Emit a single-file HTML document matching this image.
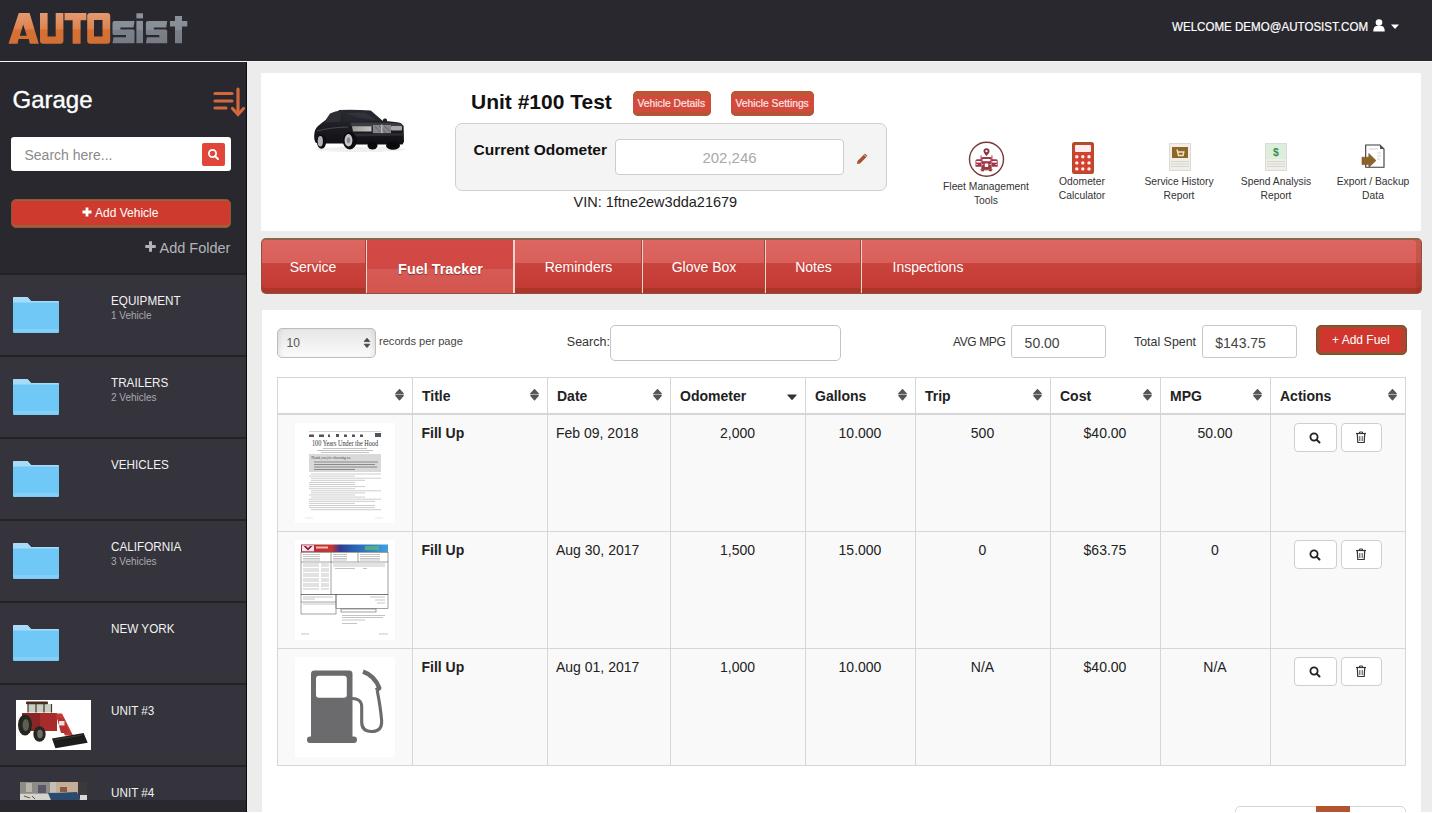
<!DOCTYPE html>
<html><head><meta charset="utf-8">
<style>
*{margin:0;padding:0;box-sizing:border-box}
html,body{width:1432px;height:813px;overflow:hidden;background:#ececec;font-family:"Liberation Sans",sans-serif;color:#333}
.a{position:absolute}
.t{position:absolute;line-height:1;white-space:nowrap}
#hdr{left:0;top:0;width:1432px;height:61px;background:#29282e}
#hdrline{left:0;top:61px;width:1432px;height:1px;background:#f4f4f4}
#side{left:0;top:62px;width:246px;height:751px;background:#29282e}
#sideedge{left:246px;top:62px;width:1px;height:751px;background:#0d0d10}
.sitem{position:absolute;left:0;width:246px;height:82px;background:#35343c;border-top:2px solid #232228}
.nm{position:absolute;left:111px;top:19px;font-size:13px;transform:scaleX(0.9);transform-origin:0 0;color:#f2f2f2;line-height:1;white-space:nowrap}
.sub{position:absolute;left:111px;top:36.3px;font-size:10px;color:#a9a9b0;line-height:1;white-space:nowrap}
.folder{position:absolute;left:13px;top:22px}
#panel1{left:261px;top:73px;width:1160px;height:158px;background:#fff}
#tabs{left:261px;top:238px;width:1161px;height:56px;border-radius:5px;box-shadow:inset 0 -5px 0 rgba(130,50,25,.35),inset -5px 0 0 rgba(130,50,25,.25);background:linear-gradient(#dc6661 0,#d95f5a 44%,#c9443d 44%,#c23832 100%);border:1px solid #93503c;border-top:2px solid #8c6446;overflow:hidden}
.tab{position:absolute;top:0;height:53px;color:#fff;font-size:14px;text-align:center;line-height:1;white-space:nowrap}
.tab span{position:absolute;left:0;right:0;top:19.5px}
.tdiv{position:absolute;top:0;width:2px;height:53px;border-left:1px solid #a9463b;border-right:1px solid #f3d3cc}
#panel2{left:262px;top:310px;width:1159px;height:503px;background:#fff}
.btnred{position:absolute;background:#cd3a2f;color:#fff;border-radius:4px;white-space:nowrap}
.inp{position:absolute;background:#fff;border:1px solid #c8c8c8;border-radius:4px}
.ic-lbl{position:absolute;font-size:10.3px;line-height:14px;text-align:center;color:#333;white-space:nowrap}
</style></head>
<body>
<div id="hdr" class="a"></div>
<div id="hdrline" class="a"></div>
<!-- logo -->
<svg class="a" style="left:0;top:0" width="200" height="60" viewBox="0 0 200 60">
<defs><linearGradient id="lg" x1="0" y1="13" x2="0" y2="44" gradientUnits="userSpaceOnUse"><stop offset="0" stop-color="#e39a70"/><stop offset="0.5" stop-color="#dd8450"/><stop offset="0.55" stop-color="#d8702f"/><stop offset="1" stop-color="#cf7038"/></linearGradient>
<linearGradient id="lg2" x1="0" y1="13" x2="0" y2="44" gradientUnits="userSpaceOnUse"><stop offset="0" stop-color="#8d939b"/><stop offset="0.55" stop-color="#878d95"/><stop offset="0.56" stop-color="#7b8089"/><stop offset="1" stop-color="#767b84"/></linearGradient></defs>
<g fill="url(#lg)" fill-rule="evenodd">
<path d="M8.5 43.7 L18.8 13 L29.6 13 L38.8 43.7 L29.8 43.7 L28.8 39 L18.6 39 L17.6 43.7 Z M23.2 24.5 L19.8 35.8 L26.8 35.8 Z"/>
<path d="M40 13 H47.6 V36.4 H55.7 V13 H63.4 V40.7 Q63.4 43.7 60.4 43.7 H43 Q40 43.7 40 40.7 Z"/>
<path d="M64.5 13 H86.4 V20.3 H80.6 V43.7 H72.6 V20.3 H64.5 Z"/>
<path d="M90.2 13 H107.2 Q110.2 13 110.2 16 V40.7 Q110.2 43.7 107.2 43.7 H90.2 Q87.2 43.7 87.2 40.7 V16 Q87.2 13 90.2 13 Z M94 19.9 V36.4 H102.5 V19.9 Z"/>
</g>
<g fill="url(#lg2)">
<path d="M114.5 20.9 H134.5 L133.5 27.5 H120.4 V29.4 H133 Q134.5 29.4 134.5 31 V43.2 H112.5 L113.5 37.2 H126 V35 H114 Q112.5 35 112.5 33.5 V23 Q112.5 20.9 114.5 20.9 Z"/>
<rect x="136.4" y="13.3" width="6.6" height="5.1"/><rect x="136.4" y="20.9" width="6.6" height="22.3"/>
<path d="M147.9 20.9 H167.2 L166.2 27.5 H153.8 V29.4 H165.7 Q167.2 29.4 167.2 31 V43.2 H145.9 L146.9 37.2 H159.3 V35 H147.4 Q145.9 35 145.9 33.5 V23 Q145.9 20.9 147.9 20.9 Z"/>
<path d="M175 15.9 H182 V20.9 H187.3 V26.5 H182 V43.2 H175 V26.5 H170 V20.9 H175 Z"/>
</g>
</svg>
<div class="t" style="left:1172.3px;top:20px;font-size:13px;transform:scaleX(0.89);transform-origin:0 0;color:#fff;-webkit-text-stroke:0.2px #fff">WELCOME DEMO@AUTOSIST.COM</div>
<svg class="a" style="left:1373px;top:19px" width="28" height="14" viewBox="0 0 28 14">
<circle cx="6" cy="3.6" r="3.3" fill="#fff"/><path d="M0.3 12.5 C0.3 8.3 2 7 3.5 7 L8.5 7 C10 7 11.7 8.3 11.7 12.5 Z" fill="#fff"/>
<path d="M18 5.5 L26 5.5 L22 10 Z" fill="#fff"/>
</svg>

<div id="side" class="a"></div>
<div id="sideedge" class="a"></div>
<div class="t" style="left:12.5px;top:87.7px;font-size:24px;color:#fff;-webkit-text-stroke:0.35px #fff">Garage</div>
<!-- sort icon -->
<svg class="a" style="left:212px;top:86px" width="36" height="32" viewBox="0 0 36 32">
<g stroke="#d2683c" stroke-width="3.2" stroke-linecap="round">
<line x1="3" y1="7.5" x2="20" y2="7.5"/><line x1="3" y1="15" x2="20" y2="15"/><line x1="3" y1="22" x2="14" y2="22"/>
<line x1="26" y1="3" x2="26" y2="28"/><path d="M20.5 22.5 L26 28.5 L31.5 22.5" fill="none"/>
</g></svg>
<div class="inp" style="left:11px;top:137px;width:220px;height:34px;border:none;border-radius:3px"></div>
<div class="t" style="left:24.5px;top:148.1px;font-size:14px;color:#8a8a8a">Search here...</div>
<div class="a" style="left:202px;top:143px;width:23px;height:23px;background:#e0473a;border-radius:2px"></div>
<svg class="a" style="left:202px;top:143px" width="23" height="23" viewBox="0 0 23 23"><circle cx="10.5" cy="10.5" r="3.6" stroke="#fff" stroke-width="1.8" fill="none"/><line x1="13" y1="13" x2="16" y2="16" stroke="#fff" stroke-width="2" stroke-linecap="round"/></svg>
<div class="btnred" style="left:11px;top:199px;width:220px;height:29px;background:#cf3a2e;border:1px solid #8a5a38;border-radius:5px;box-shadow:inset 0 1px 0 #a0603a,inset 0 -2px 0 #a0603a"></div>
<svg class="a" style="left:82px;top:207px" width="10" height="10" viewBox="0 0 10 10"><path d="M3.6 0.5h2.8v3.1h3.1v2.8H6.4v3.1H3.6V6.4H0.5V3.6h3.1z" fill="#fff"/></svg>
<div class="t" style="left:95px;top:206.8px;font-size:12px;color:#fff">Add Vehicle</div>
<svg class="a" style="left:145px;top:241px" width="11" height="11" viewBox="0 0 11 11"><path d="M4 0.3h3v3.7h3.7v3H7v3.7H4V7H0.3V4H4z" fill="#b4b4b8"/></svg>
<div class="t" style="left:159.5px;top:240.7px;font-size:14.5px;color:#b4b4b8">Add Folder</div>

<!-- sidebar list -->
<div class="sitem" style="top:273px"><svg class="folder" width="46" height="36" viewBox="0 0 46 36"><path d="M1.2 0 H14.5 L18 4 H44.8 Q46 4 46 5.2 V34.8 Q46 36 44.8 36 H1.2 Q0 36 0 34.8 V1.2 Q0 0 1.2 0Z" fill="#6fc8f6"/><path d="M1.2 0 H14.5 L18 4 H44.8 Q46 4 46 5.2 V5.5 H0 V1.2 Q0 0 1.2 0Z" fill="#a6dcf8"/><rect x="0.5" y="32" width="45" height="3.5" fill="#84cff7"/></svg><div class="nm">EQUIPMENT</div><div class="sub">1 Vehicle</div></div>
<div class="sitem" style="top:355px"><svg class="folder" width="46" height="36" viewBox="0 0 46 36"><path d="M1.2 0 H14.5 L18 4 H44.8 Q46 4 46 5.2 V34.8 Q46 36 44.8 36 H1.2 Q0 36 0 34.8 V1.2 Q0 0 1.2 0Z" fill="#6fc8f6"/><path d="M1.2 0 H14.5 L18 4 H44.8 Q46 4 46 5.2 V5.5 H0 V1.2 Q0 0 1.2 0Z" fill="#a6dcf8"/><rect x="0.5" y="32" width="45" height="3.5" fill="#84cff7"/></svg><div class="nm">TRAILERS</div><div class="sub">2 Vehicles</div></div>
<div class="sitem" style="top:437px"><svg class="folder" width="46" height="36" viewBox="0 0 46 36"><path d="M1.2 0 H14.5 L18 4 H44.8 Q46 4 46 5.2 V34.8 Q46 36 44.8 36 H1.2 Q0 36 0 34.8 V1.2 Q0 0 1.2 0Z" fill="#6fc8f6"/><path d="M1.2 0 H14.5 L18 4 H44.8 Q46 4 46 5.2 V5.5 H0 V1.2 Q0 0 1.2 0Z" fill="#a6dcf8"/><rect x="0.5" y="32" width="45" height="3.5" fill="#84cff7"/></svg><div class="nm">VEHICLES</div></div>
<div class="sitem" style="top:519px"><svg class="folder" width="46" height="36" viewBox="0 0 46 36"><path d="M1.2 0 H14.5 L18 4 H44.8 Q46 4 46 5.2 V34.8 Q46 36 44.8 36 H1.2 Q0 36 0 34.8 V1.2 Q0 0 1.2 0Z" fill="#6fc8f6"/><path d="M1.2 0 H14.5 L18 4 H44.8 Q46 4 46 5.2 V5.5 H0 V1.2 Q0 0 1.2 0Z" fill="#a6dcf8"/><rect x="0.5" y="32" width="45" height="3.5" fill="#84cff7"/></svg><div class="nm">CALIFORNIA</div><div class="sub">3 Vehicles</div></div>
<div class="sitem" style="top:601px"><svg class="folder" width="46" height="36" viewBox="0 0 46 36"><path d="M1.2 0 H14.5 L18 4 H44.8 Q46 4 46 5.2 V34.8 Q46 36 44.8 36 H1.2 Q0 36 0 34.8 V1.2 Q0 0 1.2 0Z" fill="#6fc8f6"/><path d="M1.2 0 H14.5 L18 4 H44.8 Q46 4 46 5.2 V5.5 H0 V1.2 Q0 0 1.2 0Z" fill="#a6dcf8"/><rect x="0.5" y="32" width="45" height="3.5" fill="#84cff7"/></svg><div class="nm">NEW YORK</div></div>
<div class="sitem" style="top:683px"><div class="nm">UNIT #3</div>
<svg class="a" style="left:16px;top:14.8px" width="75" height="50" viewBox="0 0 75 50">
<rect width="75" height="50" fill="#fff"/>
<rect x="12" y="4" width="24" height="8.5" fill="#c9cdc2"/>
<path d="M12 4 V12.5 M20 4 V12.5 M28 4 V12.5 M35.5 4 V12.5" stroke="#3a3a2e" stroke-width="1.2"/>
<rect x="10" y="1.4" width="22" height="2.8" rx="1" fill="#4a2a22"/>
<path d="M6 13 H26 V31 H14 L6 24 Z" fill="#8a2626"/>
<path d="M24 13 H41 V31 H24 Z" fill="#a92c2c"/>
<path d="M39 13.5 L46 13.5 L57 35.5 L49 35.5 Z" fill="#c23a32"/>
<path d="M41 18 L48 18 L53 33 L45 33 Z" fill="#b83030"/>
<rect x="43" y="21" width="5.5" height="4.5" fill="#ecdede"/>
<ellipse cx="9" cy="25" rx="7" ry="10.5" fill="#262620"/><ellipse cx="9.8" cy="25" rx="3.2" ry="6" fill="#5e5e54"/>
<ellipse cx="23.5" cy="34" rx="6.2" ry="7.8" fill="#262620"/><ellipse cx="24" cy="34" rx="2.8" ry="4.2" fill="#6e6e62"/>
<path d="M36 38.6 L67.6 33.1 L71.7 42.7 L39.4 48.2 Z" fill="#1c1c1c"/>
<path d="M38 40 L66 35" stroke="#3a3a3a" stroke-width="1"/>
</svg></div>
<div class="sitem" style="top:765px"><div class="nm">UNIT #4</div>
<svg class="a" style="left:20px;top:14.7px" width="67" height="18.3" viewBox="0 0 67 18.3">
<rect width="67" height="18.3" fill="#a09c92"/>
<rect x="0" y="0" width="30" height="11" fill="#8e8c86"/>
<rect x="6" y="1" width="6" height="9" fill="#b8b4a8"/><rect x="18" y="3" width="8" height="8" fill="#5a566a"/>
<rect x="30" y="0" width="6" height="11" fill="#c4c0b8"/>
<rect x="36" y="0" width="22" height="11" fill="#c4ae98"/><rect x="40" y="5" width="7" height="6" fill="#8a5a40"/>
<rect x="58" y="0" width="9" height="18.3" fill="#3a3a3c"/>
<path d="M0 12 H30 L35 10 H56 L60 18.3 H0 Z" fill="#d4d4cc"/>
<path d="M28 11 L57 10 L60 18.3 L31 18.3 Z" fill="#2c4a6e"/>
<path d="M4 14 L10 16 M12 14 L15 17" stroke="#555" stroke-width="1"/>
<rect x="60" y="13" width="7" height="5" fill="#d8d8d8"/>
</svg></div>
<div class="a" style="left:0;top:800px;width:246px;height:12px;background:#29282e"></div>


<div id="panel1" class="a"></div>
<!-- car -->
<svg class="a" style="left:310px;top:104px" width="100" height="50" viewBox="0 0 100 50">
<defs><linearGradient id="cb" x1="0" y1="0" x2="0" y2="1"><stop offset="0" stop-color="#2a2a32"/><stop offset="0.5" stop-color="#1c1c22"/><stop offset="1" stop-color="#101014"/></linearGradient>
<linearGradient id="hl" x1="0" y1="0" x2="1" y2="0"><stop offset="0" stop-color="#9c9c96"/><stop offset="1" stop-color="#c4c4be"/></linearGradient></defs>
<ellipse cx="50" cy="45.5" rx="45" ry="2.6" fill="#f0f0f0"/>
<path d="M29.3 5.9 Q45 5.2 60.8 6.6 L72.6 16.8 Q84 17.5 90.8 18.9 L93.6 22 L94 37.7 L92.5 40.5 L47 40.5 L33 39.5 L15 39.5 L6 39 Q4 37 4.2 31 Q4.5 25 8 22 L12.6 18.2 Z" fill="url(#cb)"/>
<path d="M14 18.5 L20 9.5 Q25 7 31 6.8 L30.5 18 Z" fill="#2e2e36"/>
<path d="M32.5 7 Q45 6.2 60 7.4 L70.5 16.8 L56 17.5 L33 18 Z" fill="#26262e"/>
<path d="M34 9 L55 8.5 L66 16 L50 14 Z" fill="#36363e" opacity="0.8"/>
<path d="M7 27 Q20 23.5 38 23" stroke="#4e4e56" stroke-width="0.9" fill="none"/>
<path d="M40 18.8 Q62 18 90.5 19.5 L92.5 22.3 L70 22 L42 23 Z" fill="#3c3c44"/>
<path d="M42 22.3 L61.5 22.3 L61.5 27.6 L43 27.6 Z" fill="url(#hl)"/>
<path d="M62.8 21 L81 21 L81 29.3 L62.8 29.3 Z" fill="#85858b"/>
<path d="M64.5 22 L71 28.5 M69 22 L76 28.5 M74 22 L80 27" stroke="#55555b" stroke-width="0.7"/>
<line x1="71.8" y1="20.5" x2="71.8" y2="29.5" stroke="#d0d0d0" stroke-width="1"/>
<rect x="81" y="22" width="11" height="4.6" rx="1" fill="#a9a9a4"/>
<path d="M41 29.5 L93.5 29.3 L93.8 31.5 L41 32.5 Z" fill="#2c2c32"/>
<rect x="73" y="14.5" width="4" height="3.5" rx="1.5" fill="#202026"/>
<ellipse cx="11.5" cy="37.7" rx="4.7" ry="7" fill="#0c0c0e"/><ellipse cx="10.3" cy="37.3" rx="2.6" ry="5.2" fill="#b4b4b8"/>
<ellipse cx="39.8" cy="36.7" rx="7" ry="8.7" fill="#0c0c0e"/><ellipse cx="38.5" cy="36.3" rx="3.9" ry="6.2" fill="#c6c6ca"/><ellipse cx="38.5" cy="36.3" rx="1.8" ry="3" fill="#8a8a90"/>
<ellipse cx="62.5" cy="41.5" rx="5" ry="4" fill="#0a0a0c"/>
<ellipse cx="83" cy="41.5" rx="7" ry="4.3" fill="#0a0a0c"/>
</svg>
<div class="t" style="left:471px;top:91.2px;font-size:21px;font-weight:700;color:#111">Unit #100 Test</div>
<div class="btnred" style="left:633px;top:91px;width:78px;height:25px;background:#d24a3b;border-radius:5px;box-shadow:inset 0 5px 0 #bf5436,inset 0 -4px 0 #b4553a"></div>
<div class="t" style="left:637.5px;top:99px;font-size:10.3px;color:#fde4e4;-webkit-text-stroke:0.2px #fde4e4">Vehicle Details</div>
<div class="btnred" style="left:731px;top:91px;width:83px;height:25px;background:#d24a3b;border-radius:5px;box-shadow:inset 0 5px 0 #bf5436,inset 0 -4px 0 #b4553a"></div>
<div class="t" style="left:735.5px;top:99px;font-size:10.3px;color:#fde4e4;-webkit-text-stroke:0.2px #fde4e4">Vehicle Settings</div>
<div class="a" style="left:455px;top:123px;width:432px;height:68px;background:#f4f4f4;border:1px solid #cfcfcf;border-radius:7px"></div>
<div class="t" style="left:473.5px;top:141.6px;font-size:15.5px;font-weight:700;color:#111">Current Odometer</div>
<div class="inp" style="left:615px;top:139px;width:229px;height:36px;border-color:#cdcdcd"></div>
<div class="t" style="left:615px;width:229px;text-align:center;top:150.1px;font-size:15px;color:#a9a9a9">202,246</div>
<svg class="a" style="left:856px;top:152px" width="13" height="13" viewBox="0 0 13 13"><path d="M1 12 L1.5 9 L9 1.5 L11.5 4 L4 11.5 Z" fill="#a5522e"/><path d="M8 2.5 L10.5 5" stroke="#f4f4f4" stroke-width="0.8"/></svg>
<div class="t" style="left:573.5px;top:194.5px;font-size:14.5px;color:#222">VIN: 1ftne2ew3dda21679</div>

<!-- icons -->
<svg class="a" style="left:968px;top:141px" width="37" height="37" viewBox="0 0 37 37">
<circle cx="18.5" cy="18.2" r="17" fill="none" stroke="#763a3b" stroke-width="1.4"/>
<path d="M18.5 7.2 a3 3 0 0 1 3 3 c0 1.8 -3 4.8 -3 4.8 c0 0 -3 -3 -3 -4.8 a3 3 0 0 1 3 -3z" fill="#8a3342"/>
<circle cx="18.5" cy="10.2" r="1.1" fill="#fff"/>
<path d="M7.5 19.5 Q8 18.3 9.5 18.3 H13 V25.8 H7.5 Z M24 18.3 H27.8 Q29.3 18.3 29.7 19.5 V25.8 H24 Z" fill="#a23444"/>
<rect x="8.3" y="20" width="4.5" height="1.6" fill="#fff"/><rect x="24.2" y="20" width="4.6" height="1.6" fill="#fff"/>
<rect x="8.3" y="23" width="1.2" height="1" fill="#fff"/><rect x="27.6" y="23" width="1.2" height="1" fill="#fff"/>
<rect x="12.6" y="14.3" width="0.9" height="6" fill="#8a3342"/><rect x="23.5" y="14.3" width="0.9" height="6" fill="#8a3342"/>
<path d="M13.3 17 Q13.5 16 15 16 H22 Q23.5 16 23.7 17 V28.5 H13.3 Z" fill="#a23444"/>
<rect x="14.6" y="18" width="7.8" height="2.2" fill="#fff"/>
<rect x="16.8" y="22.5" width="3.4" height="3.4" fill="#fff"/>
<rect x="14.2" y="23" width="1" height="1" fill="#fff"/><rect x="21.8" y="23" width="1" height="1" fill="#fff"/>
<rect x="12.5" y="28.3" width="12" height="1" fill="#7a3a2e"/>
<rect x="13.3" y="29" width="2.6" height="1.3" fill="#7a3a2e"/><rect x="21.1" y="29" width="2.6" height="1.3" fill="#7a3a2e"/>
</svg>
<div class="ic-lbl" style="left:936px;width:100px;top:180px">Fleet Management<br>Tools</div>
<svg class="a" style="left:1072px;top:142px" width="22" height="32" viewBox="0 0 22 32">
<rect x="0" y="0" width="22" height="32" rx="2.5" fill="#a8502c"/>
<rect x="1.3" y="2.3" width="19.4" height="28.4" rx="1.5" fill="#d3402d"/>
<rect x="3" y="3" width="16" height="7" rx="1" fill="#fbeef0"/>
<g fill="#fdf2f2"><circle cx="4.8" cy="14.7" r="1.7"/><circle cx="10.8" cy="14.7" r="1.7"/><circle cx="17" cy="14.7" r="1.7"/>
<circle cx="4.8" cy="20.9" r="1.7"/><circle cx="10.8" cy="20.9" r="1.7"/><circle cx="17" cy="20.9" r="1.7"/>
<circle cx="4.8" cy="26.9" r="1.7"/><circle cx="10.8" cy="26.9" r="1.7"/><circle cx="17" cy="26.9" r="1.7"/></g>
</svg>
<div class="ic-lbl" style="left:1032px;width:100px;top:175px">Odometer<br>Calculator</div>
<svg class="a" style="left:1169px;top:143px" width="22" height="28" viewBox="0 0 22 28">
<rect x="0.5" y="0.5" width="21" height="27" fill="#efeee9" stroke="#dcdad4"/>
<rect x="1" y="1" width="20" height="15" fill="#f6ece8"/>
<rect x="3" y="4" width="16" height="11" fill="#8c6826"/>
<path d="M8 6.5 L9.5 12.5 H14 L14.8 9 H9.2" stroke="#f4e6cc" stroke-width="1.4" fill="none"/>
<g stroke="#d6d4cc" stroke-width="1"><line x1="2" y1="18.5" x2="20" y2="18.5"/><line x1="2" y1="21" x2="20" y2="21"/><line x1="2" y1="23.5" x2="20" y2="23.5"/></g>
</svg>
<div class="ic-lbl" style="left:1129px;width:100px;top:175px">Service History<br>Report</div>
<svg class="a" style="left:1265px;top:143px" width="22" height="28" viewBox="0 0 22 28">
<rect x="0.5" y="0.5" width="21" height="27" fill="#efeee9" stroke="#dcdad4"/>
<rect x="1" y="1" width="20" height="15" fill="#dcefdc"/>
<text x="11" y="13.2" font-family="Liberation Sans" font-weight="700" font-size="10.5" fill="#3f8a48" text-anchor="middle">$</text>
<g stroke="#d6d4cc" stroke-width="1"><line x1="2" y1="18.5" x2="20" y2="18.5"/><line x1="2" y1="21" x2="20" y2="21"/><line x1="2" y1="23.5" x2="20" y2="23.5"/></g>
</svg>
<div class="ic-lbl" style="left:1226px;width:100px;top:175px">Spend Analysis<br>Report</div>
<svg class="a" style="left:1361px;top:144px" width="24" height="25" viewBox="0 0 24 25">
<path d="M4.7 1 H19 L23 5 V23.2 H4.7 Z" fill="#fff" stroke="#3a3a3a" stroke-width="1.1"/>
<path d="M19 1 V5 H23 Z" fill="#555"/>
<g stroke="#c8c8c8" stroke-width="0.8"><line x1="8" y1="5" x2="17" y2="5"/><line x1="16" y1="9" x2="20" y2="9"/><line x1="16" y1="12" x2="20" y2="12"/><line x1="16" y1="15" x2="19" y2="15"/></g>
<path d="M1 13.2 H7.8 V9.4 L15 16.5 L7.8 23.4 V20.6 H1 Z" fill="#8b6428" stroke="#7a4a30" stroke-width="0.6"/>
</svg>
<div class="ic-lbl" style="left:1323px;width:100px;top:175px">Export / Backup<br>Data</div>


<div id="tabs" class="a">
<div class="tab" style="left:0;width:103px"><span style="left:-1px">Service</span></div>
<div class="tdiv" style="left:103px"></div>
<div class="a" style="left:105px;top:0;width:147px;height:53px;background:linear-gradient(#d24a45 0,#d14743 55%,#d65a56 55%,#d4554f 100%)"></div>
<div class="tab" style="left:105px;width:147px"><span style="font-weight:700;font-size:14.4px;top:21.5px;text-shadow:0 1px 1px rgba(90,20,10,.6)">Fuel Tracker</span></div>
<div class="tdiv" style="left:251px;border-left-color:#f3d3cc"></div>
<div class="tab" style="left:253px;width:127px"><span>Reminders</span></div>
<div class="tdiv" style="left:379px"></div>
<div class="tab" style="left:381px;width:122px"><span>Glove Box</span></div>
<div class="tdiv" style="left:502px"></div>
<div class="tab" style="left:504px;width:95px"><span>Notes</span></div>
<div class="tdiv" style="left:598px"></div>
<div class="tab" style="left:600px;width:132px"><span>Inspections</span></div>
</div>

<div id="panel2" class="a"></div>
<div class="a" style="left:277px;top:328px;width:99px;height:30px;border:1px solid #bdbdbd;border-radius:5px;background:linear-gradient(#e6e6e6,#f0f0f0 50%,#fbfbfb);box-shadow:inset 4px 0 4px -2px rgba(0,0,0,.07),inset -4px 0 4px -2px rgba(0,0,0,.07)"></div>
<div class="t" style="left:286.5px;top:336.6px;font-size:12px;color:#555">10</div>
<svg class="a" style="left:362.5px;top:337px" width="8" height="12" viewBox="0 0 8 12"><path d="M1.2 4.6 L4 1.2 L6.8 4.6Z M1.2 7.2 L4 10.6 L6.8 7.2Z" fill="#444" stroke="#444" stroke-width="0.8" stroke-linejoin="round"/></svg>
<div class="t" style="left:379px;top:336.3px;font-size:11.1px;color:#444">records per page</div>
<div class="t" style="left:566.8px;top:336.4px;font-size:12.5px;color:#333">Search:</div>
<div class="inp" style="left:610px;top:325px;width:231px;height:36px;border-color:#c4c4c4;border-radius:5px"></div>
<div class="t" style="left:953px;top:335.8px;font-size:12px;letter-spacing:-0.4px;color:#333">AVG MPG</div>
<div class="inp" style="left:1011px;top:325px;width:95px;height:33px;border-color:#c8c8c8;border-radius:3px"></div>
<div class="t" style="left:1024.6px;top:335.9px;font-size:14px;color:#444">50.00</div>
<div class="t" style="left:1134px;top:335.5px;font-size:12.4px;color:#333">Total Spent</div>
<div class="inp" style="left:1202px;top:325px;width:95px;height:33px;border-color:#c8c8c8;border-radius:3px"></div>
<div class="t" style="left:1215.3px;top:335.9px;font-size:14px;color:#444">$143.75</div>
<div class="btnred" style="left:1316px;top:325px;width:91px;height:30px;background:#d0362e;border:1px solid #7e4a2a;border-radius:5px;box-shadow:inset 0 2px 0 #93552f,inset 0 -2px 0 #93552f,inset 3px 0 0 #9a5030,inset -5px 0 0 #b0442e"></div>
<div class="t" style="left:1332px;top:333.5px;font-size:12px;color:#fff">+ Add Fuel</div>
<div class="a" style="left:277px;top:377px;width:1129px;height:389px;background:#fff;border:1px solid #d6d6d6"></div>
<div class="a" style="left:278px;top:415px;width:1127px;height:116px;background:#f9f9f9"></div>
<div class="a" style="left:278px;top:532px;width:1127px;height:116px;background:#f9f9f9"></div>
<div class="a" style="left:278px;top:649px;width:1127px;height:116px;background:#f9f9f9"></div>
<div class="a" style="left:277px;top:413px;width:1129px;height:2px;background:#d6d6d6"></div>
<div class="a" style="left:277px;top:531px;width:1129px;height:1px;background:#d6d6d6"></div>
<div class="a" style="left:277px;top:648px;width:1129px;height:1px;background:#d6d6d6"></div>
<div class="a" style="left:412px;top:377px;width:1px;height:388px;background:#d6d6d6"></div>
<div class="a" style="left:547px;top:377px;width:1px;height:388px;background:#d6d6d6"></div>
<div class="a" style="left:670px;top:377px;width:1px;height:388px;background:#d6d6d6"></div>
<div class="a" style="left:805px;top:377px;width:1px;height:388px;background:#d6d6d6"></div>
<div class="a" style="left:915px;top:377px;width:1px;height:388px;background:#d6d6d6"></div>
<div class="a" style="left:1050px;top:377px;width:1px;height:388px;background:#d6d6d6"></div>
<div class="a" style="left:1160px;top:377px;width:1px;height:388px;background:#d6d6d6"></div>
<div class="a" style="left:1270px;top:377px;width:1px;height:388px;background:#d6d6d6"></div>
<svg class="a" style="left:394px;top:388px" width="11" height="13" viewBox="0 0 11 13"><path d="M1.8 5.8 L5.5 1.6 L9.2 5.8Z M1.8 7.6 L5.5 11.8 L9.2 7.6Z" fill="#555" stroke="#555" stroke-width="1.3" stroke-linejoin="round"/></svg>
<div class="t" style="left:422px;top:389.2px;font-size:14px;font-weight:700;color:#222">Title</div>
<svg class="a" style="left:529px;top:388px" width="11" height="13" viewBox="0 0 11 13"><path d="M1.8 5.8 L5.5 1.6 L9.2 5.8Z M1.8 7.6 L5.5 11.8 L9.2 7.6Z" fill="#555" stroke="#555" stroke-width="1.3" stroke-linejoin="round"/></svg>
<div class="t" style="left:557px;top:389.2px;font-size:14px;font-weight:700;color:#222">Date</div>
<svg class="a" style="left:652px;top:388px" width="11" height="13" viewBox="0 0 11 13"><path d="M1.8 5.8 L5.5 1.6 L9.2 5.8Z M1.8 7.6 L5.5 11.8 L9.2 7.6Z" fill="#555" stroke="#555" stroke-width="1.3" stroke-linejoin="round"/></svg>
<div class="t" style="left:680px;top:389.2px;font-size:14px;font-weight:700;color:#222">Odometer</div>
<svg class="a" style="left:787px;top:394px" width="10" height="6" viewBox="0 0 10 6"><path d="M1 1 L9 1 L5 5.3Z" fill="#333" stroke="#333" stroke-width="1.2" stroke-linejoin="round"/></svg>
<div class="t" style="left:815px;top:389.2px;font-size:14px;font-weight:700;color:#222">Gallons</div>
<svg class="a" style="left:897px;top:388px" width="11" height="13" viewBox="0 0 11 13"><path d="M1.8 5.8 L5.5 1.6 L9.2 5.8Z M1.8 7.6 L5.5 11.8 L9.2 7.6Z" fill="#555" stroke="#555" stroke-width="1.3" stroke-linejoin="round"/></svg>
<div class="t" style="left:925px;top:389.2px;font-size:14px;font-weight:700;color:#222">Trip</div>
<svg class="a" style="left:1032px;top:388px" width="11" height="13" viewBox="0 0 11 13"><path d="M1.8 5.8 L5.5 1.6 L9.2 5.8Z M1.8 7.6 L5.5 11.8 L9.2 7.6Z" fill="#555" stroke="#555" stroke-width="1.3" stroke-linejoin="round"/></svg>
<div class="t" style="left:1060px;top:389.2px;font-size:14px;font-weight:700;color:#222">Cost</div>
<svg class="a" style="left:1142px;top:388px" width="11" height="13" viewBox="0 0 11 13"><path d="M1.8 5.8 L5.5 1.6 L9.2 5.8Z M1.8 7.6 L5.5 11.8 L9.2 7.6Z" fill="#555" stroke="#555" stroke-width="1.3" stroke-linejoin="round"/></svg>
<div class="t" style="left:1170px;top:389.2px;font-size:14px;font-weight:700;color:#222">MPG</div>
<svg class="a" style="left:1252px;top:388px" width="11" height="13" viewBox="0 0 11 13"><path d="M1.8 5.8 L5.5 1.6 L9.2 5.8Z M1.8 7.6 L5.5 11.8 L9.2 7.6Z" fill="#555" stroke="#555" stroke-width="1.3" stroke-linejoin="round"/></svg>
<div class="t" style="left:1280px;top:389.2px;font-size:14px;font-weight:700;color:#222">Actions</div>
<svg class="a" style="left:1387px;top:388px" width="11" height="13" viewBox="0 0 11 13"><path d="M1.8 5.8 L5.5 1.6 L9.2 5.8Z M1.8 7.6 L5.5 11.8 L9.2 7.6Z" fill="#555" stroke="#555" stroke-width="1.3" stroke-linejoin="round"/></svg>
<div class="t" style="left:421.5px;top:426.15px;font-size:14px;font-weight:700;color:#222">Fill Up</div>
<div class="t" style="left:556px;top:426.15px;font-size:14px;color:#222">Feb 09, 2018</div>
<div class="t" style="left:670px;width:135px;text-align:center;top:426.15px;font-size:14px;color:#222">2,000</div>
<div class="t" style="left:805px;width:110px;text-align:center;top:426.15px;font-size:14px;color:#222">10.000</div>
<div class="t" style="left:915px;width:135px;text-align:center;top:426.15px;font-size:14px;color:#222">500</div>
<div class="t" style="left:1050px;width:110px;text-align:center;top:426.15px;font-size:14px;color:#222">$40.00</div>
<div class="t" style="left:1160px;width:110px;text-align:center;top:426.15px;font-size:14px;color:#222">50.00</div>
<div class="a" style="left:1294px;top:423px;width:43px;height:29px;background:#fff;border:1px solid #cfcfcf;border-radius:4px"></div>
<svg class="a" style="left:1309px;top:432px" width="12" height="12" viewBox="0 0 12 12"><circle cx="5" cy="5" r="3.6" fill="none" stroke="#222" stroke-width="1.8"/><line x1="7.6" y1="7.6" x2="10.5" y2="10.5" stroke="#222" stroke-width="2" stroke-linecap="round"/></svg>
<div class="a" style="left:1341px;top:423px;width:41px;height:29px;background:#fff;border:1px solid #cfcfcf;border-radius:4px"></div>
<svg class="a" style="left:1355px;top:431px" width="12" height="13" viewBox="0 0 12 13"><path d="M1 2.5 H11" stroke="#333" stroke-width="1.2"/><path d="M4.5 2.5 V1 H7.5 V2.5" fill="none" stroke="#333" stroke-width="1"/><path d="M2.3 3 L2.8 11.5 H9.2 L9.7 3" fill="none" stroke="#333" stroke-width="1.2"/><path d="M4.8 5 V10 M7.2 5 V10" stroke="#333" stroke-width="0.9"/></svg>
<div class="t" style="left:421.5px;top:543.15px;font-size:14px;font-weight:700;color:#222">Fill Up</div>
<div class="t" style="left:556px;top:543.15px;font-size:14px;color:#222">Aug 30, 2017</div>
<div class="t" style="left:670px;width:135px;text-align:center;top:543.15px;font-size:14px;color:#222">1,500</div>
<div class="t" style="left:805px;width:110px;text-align:center;top:543.15px;font-size:14px;color:#222">15.000</div>
<div class="t" style="left:915px;width:135px;text-align:center;top:543.15px;font-size:14px;color:#222">0</div>
<div class="t" style="left:1050px;width:110px;text-align:center;top:543.15px;font-size:14px;color:#222">$63.75</div>
<div class="t" style="left:1160px;width:110px;text-align:center;top:543.15px;font-size:14px;color:#222">0</div>
<div class="a" style="left:1294px;top:540px;width:43px;height:29px;background:#fff;border:1px solid #cfcfcf;border-radius:4px"></div>
<svg class="a" style="left:1309px;top:549px" width="12" height="12" viewBox="0 0 12 12"><circle cx="5" cy="5" r="3.6" fill="none" stroke="#222" stroke-width="1.8"/><line x1="7.6" y1="7.6" x2="10.5" y2="10.5" stroke="#222" stroke-width="2" stroke-linecap="round"/></svg>
<div class="a" style="left:1341px;top:540px;width:41px;height:29px;background:#fff;border:1px solid #cfcfcf;border-radius:4px"></div>
<svg class="a" style="left:1355px;top:548px" width="12" height="13" viewBox="0 0 12 13"><path d="M1 2.5 H11" stroke="#333" stroke-width="1.2"/><path d="M4.5 2.5 V1 H7.5 V2.5" fill="none" stroke="#333" stroke-width="1"/><path d="M2.3 3 L2.8 11.5 H9.2 L9.7 3" fill="none" stroke="#333" stroke-width="1.2"/><path d="M4.8 5 V10 M7.2 5 V10" stroke="#333" stroke-width="0.9"/></svg>
<div class="t" style="left:421.5px;top:660.15px;font-size:14px;font-weight:700;color:#222">Fill Up</div>
<div class="t" style="left:556px;top:660.15px;font-size:14px;color:#222">Aug 01, 2017</div>
<div class="t" style="left:670px;width:135px;text-align:center;top:660.15px;font-size:14px;color:#222">1,000</div>
<div class="t" style="left:805px;width:110px;text-align:center;top:660.15px;font-size:14px;color:#222">10.000</div>
<div class="t" style="left:915px;width:135px;text-align:center;top:660.15px;font-size:14px;color:#222">N/A</div>
<div class="t" style="left:1050px;width:110px;text-align:center;top:660.15px;font-size:14px;color:#222">$40.00</div>
<div class="t" style="left:1160px;width:110px;text-align:center;top:660.15px;font-size:14px;color:#222">N/A</div>
<div class="a" style="left:1294px;top:657px;width:43px;height:29px;background:#fff;border:1px solid #cfcfcf;border-radius:4px"></div>
<svg class="a" style="left:1309px;top:666px" width="12" height="12" viewBox="0 0 12 12"><circle cx="5" cy="5" r="3.6" fill="none" stroke="#222" stroke-width="1.8"/><line x1="7.6" y1="7.6" x2="10.5" y2="10.5" stroke="#222" stroke-width="2" stroke-linecap="round"/></svg>
<div class="a" style="left:1341px;top:657px;width:41px;height:29px;background:#fff;border:1px solid #cfcfcf;border-radius:4px"></div>
<svg class="a" style="left:1355px;top:665px" width="12" height="13" viewBox="0 0 12 13"><path d="M1 2.5 H11" stroke="#333" stroke-width="1.2"/><path d="M4.5 2.5 V1 H7.5 V2.5" fill="none" stroke="#333" stroke-width="1"/><path d="M2.3 3 L2.8 11.5 H9.2 L9.7 3" fill="none" stroke="#333" stroke-width="1.2"/><path d="M4.8 5 V10 M7.2 5 V10" stroke="#333" stroke-width="0.9"/></svg>
<svg class="a" style="left:295px;top:423px" width="100" height="100" viewBox="0 0 100 100">
<rect width="100" height="100" fill="#fff"/>
<line x1="14" y1="8.5" x2="86" y2="8.5" stroke="#aaa" stroke-width="0.5"/>
<g fill="#555"><rect x="14" y="11.5" width="5" height="2.5"/><rect x="24" y="11.5" width="5" height="2.5"/><rect x="33" y="11.5" width="2" height="2.5"/><rect x="41" y="11" width="3" height="3"/><rect x="49" y="11.5" width="3" height="2.5"/><rect x="57" y="11.5" width="3" height="2.5"/><rect x="65" y="11.5" width="3" height="2.5"/><rect x="80" y="10" width="6" height="4"/></g>
<text x="50" y="23" font-family="Liberation Serif" font-size="8.2" fill="#333" text-anchor="middle" textLength="66" lengthAdjust="spacingAndGlyphs">100 Years Under the Hood</text>
<g stroke="#999" stroke-width="0.6"><line x1="28" y1="25.5" x2="72" y2="25.5"/><line x1="22" y1="27.5" x2="78" y2="27.5"/><line x1="26" y1="29.5" x2="74" y2="29.5"/></g>
<rect x="14" y="31" width="72" height="18" fill="#d9d9d9"/>
<text x="16" y="36" font-family="Liberation Serif" font-style="italic" font-size="5" fill="#444" textLength="40" lengthAdjust="spacingAndGlyphs">Thank you for choosing us.</text>
<g stroke="#666" stroke-width="0.7"><line x1="19" y1="39" x2="83" y2="39"/><line x1="19" y1="41.5" x2="80" y2="41.5"/><line x1="19" y1="44" x2="82" y2="44"/><line x1="19" y1="46.5" x2="60" y2="46.5"/></g>
<g stroke="#9a9a9a" stroke-width="0.5">
<line x1="16" y1="51.0" x2="86" y2="51.0"/>
<line x1="14" y1="53.1" x2="60" y2="53.1"/>
<line x1="16" y1="55.2" x2="86" y2="55.2"/>
<line x1="16" y1="57.3" x2="70" y2="57.3"/>
<line x1="14" y1="59.4" x2="60" y2="59.4"/>
<line x1="14" y1="61.5" x2="60" y2="61.5"/>
<line x1="14" y1="63.6" x2="70" y2="63.6"/>
<line x1="14" y1="65.7" x2="60" y2="65.7"/>
<line x1="16" y1="67.8" x2="86" y2="67.8"/>
<line x1="16" y1="69.9" x2="70" y2="69.9"/>
<line x1="14" y1="72.0" x2="60" y2="72.0"/>
<line x1="16" y1="74.1" x2="70" y2="74.1"/>
<line x1="14" y1="76.2" x2="86" y2="76.2"/>
<line x1="14" y1="78.3" x2="80" y2="78.3"/>
<line x1="14" y1="80.4" x2="60" y2="80.4"/>
<line x1="14" y1="82.5" x2="80" y2="82.5"/>
<line x1="14" y1="84.6" x2="80" y2="84.6"/>
<line x1="16" y1="86.7" x2="86" y2="86.7"/>
</g><g stroke="#ccc" stroke-width="0.5"><line x1="10" y1="95" x2="18" y2="95"/><line x1="80" y1="95" x2="88" y2="95"/></g></svg>
<svg class="a" style="left:295px;top:540px" width="100" height="100" viewBox="0 0 100 100">
<defs><linearGradient id="rg2" x1="0" x2="1"><stop offset="0" stop-color="#a8283a"/><stop offset="0.35" stop-color="#c83830"/><stop offset="0.45" stop-color="#303c90"/><stop offset="0.6" stop-color="#2a60b0"/><stop offset="1" stop-color="#40a0e0"/></linearGradient></defs>
<rect width="100" height="100" fill="#fff"/>
<rect x="6" y="4.5" width="87" height="7.5" fill="url(#rg2)"/>
<rect x="7" y="5.3" width="12" height="6" fill="#f4e8ee"/><path d="M8.5 6 L13 10.5 L17.5 6 L15 6 L13 8 L11 6Z" fill="#8a2040"/>
<rect x="21" y="6.5" width="12" height="2" fill="#f0c0b0"/>
<rect x="70" y="6" width="14" height="4" fill="#5ab870" opacity="0.8"/>
<g fill="none" stroke="#555" stroke-width="0.55"><rect x="6" y="12.5" width="87" height="42"/><line x1="6" y1="22" x2="93" y2="22"/><line x1="36" y1="12.5" x2="36" y2="54.5"/><line x1="63" y1="12.5" x2="63" y2="22"/><rect x="6" y="54.5" width="35" height="19.5"/><rect x="41" y="54.5" width="52" height="14"/><line x1="6" y1="62" x2="41" y2="62"/><rect x="46" y="69" width="35" height="3"/></g>
<g stroke="#888" stroke-width="0.5">
<line x1="8" y1="14.5" x2="25" y2="14.5"/><line x1="38" y1="14.5" x2="52" y2="14.5"/><line x1="65" y1="14.5" x2="85" y2="14.5"/>
<line x1="8" y1="16.5" x2="25" y2="16.5"/><line x1="38" y1="16.5" x2="52" y2="16.5"/><line x1="65" y1="16.5" x2="85" y2="16.5"/>
<line x1="8" y1="18.5" x2="25" y2="18.5"/><line x1="38" y1="18.5" x2="52" y2="18.5"/><line x1="65" y1="18.5" x2="85" y2="18.5"/>
<line x1="8" y1="20" x2="25" y2="20"/><line x1="38" y1="20" x2="52" y2="20"/><line x1="65" y1="20" x2="85" y2="20"/>
<line x1="8" y1="24" x2="24" y2="24"/><line x1="26" y1="24" x2="34" y2="24"/>
<line x1="8" y1="26" x2="24" y2="26"/><line x1="26" y1="26" x2="34" y2="26"/>
<line x1="8" y1="29" x2="24" y2="29"/><line x1="26" y1="29" x2="34" y2="29"/>
<line x1="8" y1="31" x2="24" y2="31"/><line x1="26" y1="31" x2="34" y2="31"/>
<line x1="8" y1="34" x2="24" y2="34"/><line x1="26" y1="34" x2="34" y2="34"/>
<line x1="8" y1="36" x2="24" y2="36"/><line x1="26" y1="36" x2="34" y2="36"/>
<line x1="8" y1="39" x2="24" y2="39"/><line x1="26" y1="39" x2="34" y2="39"/>
<line x1="8" y1="41" x2="24" y2="41"/><line x1="26" y1="41" x2="34" y2="41"/>
<line x1="8" y1="44" x2="24" y2="44"/><line x1="26" y1="44" x2="34" y2="44"/>
<line x1="8" y1="46" x2="24" y2="46"/><line x1="26" y1="46" x2="34" y2="46"/>
<line x1="8" y1="49" x2="24" y2="49"/><line x1="26" y1="49" x2="34" y2="49"/>
<line x1="38" y1="24" x2="90" y2="24"/>
<line x1="38" y1="26" x2="90" y2="26"/>
<line x1="40" y1="28.5" x2="60" y2="28.5"/><line x1="68" y1="28.5" x2="72" y2="28.5"/><line x1="8" y1="57" x2="38" y2="57"/><line x1="8" y1="59" x2="20" y2="59"/><line x1="8" y1="64" x2="40" y2="64"/><line x1="75" y1="57" x2="90" y2="57"/><line x1="80" y1="60" x2="90" y2="60"/><line x1="82" y1="63" x2="90" y2="63"/><line x1="47" y1="75.5" x2="90" y2="75.5"/><line x1="47" y1="77.5" x2="88" y2="77.5"/><line x1="47" y1="80" x2="70" y2="80"/><line x1="47" y1="83.5" x2="62" y2="83.5"/><line x1="6" y1="94" x2="14" y2="94"/><line x1="84" y1="94" x2="93" y2="94"/>
</g></svg>
<svg class="a" style="left:295px;top:657px" width="100" height="100" viewBox="0 0 100 100">
<rect width="100" height="100" fill="#fff"/>
<path d="M16 17 Q16 13.6 19.5 13.6 L54 13.6 Q57.5 13.6 57.5 17 L57.5 81 L16 81 Z" fill="#6b6b6d"/>
<rect x="12" y="79.5" width="50" height="6.5" rx="3.2" fill="#6b6b6d"/>
<rect x="21" y="18.7" width="30.8" height="22" rx="3" fill="#fff"/>
<path d="M56 41.5 Q66.7 41 66.7 50 L66.7 65 Q66.7 74.5 76.6 74.5 Q87.5 74.5 86.6 63 Q85.5 50 82.2 33.5" fill="none" stroke="#6b6b6d" stroke-width="3.1"/>
<path d="M68 14.6 Q79.5 18.5 84.3 31 L81.2 33.5" fill="none" stroke="#6b6b6d" stroke-width="4.4" stroke-linejoin="round"/>
</svg>
<div class="a" style="left:1235px;top:806px;width:171px;height:20px;border:1px solid #d6d6d6;border-radius:5px;background:#fff"></div>
<div class="a" style="left:1316px;top:806px;width:34px;height:10px;background:#b4532f"></div>
<div class="a" style="left:0;top:812px;width:1432px;height:1px;background:#fff"></div>
</body></html>
